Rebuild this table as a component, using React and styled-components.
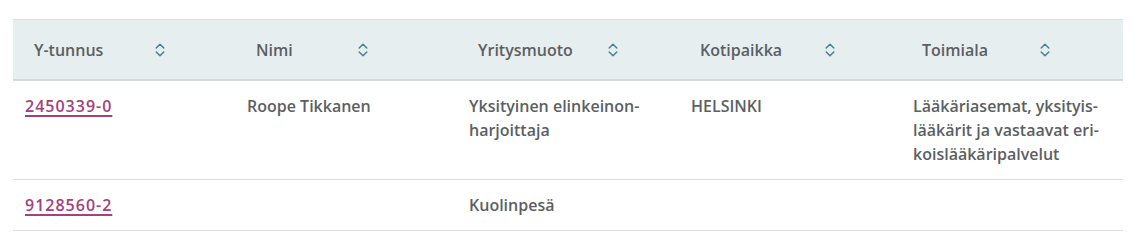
import React from "react";
import styled, { createGlobalStyle } from "styled-components";

const GlobalStyle = createGlobalStyle`
  html, body { margin: 0; padding: 0; background: #ffffff; }
  body {
    font-family: "Open Sans", "Noto Sans", sans-serif;
    font-weight: 600;
    font-size: 16px;
    color: #5b5f63;
  }
`;

const Page = styled.div`
  padding: 19px 14px 0 13px;
`;

const Table = styled.table`
  width: 1110px;
  border-collapse: collapse;
  table-layout: fixed;
`;

const HeadRow = styled.tr`
  background: #e7eef0;
  border-top: 1px solid #d8dfe2;
  border-bottom: 2px solid #d2d8db;
`;

const HeadCell = styled.th`
  height: 59px;
  padding: 0 0 0 21px;
  text-align: left;
  font-weight: 600;
  vertical-align: middle;
`;

const SortButton = styled.button`
  display: grid;
  grid-template-columns: ${(p) => p.$labelWidth}px 10px;
  justify-items: start;
  align-items: center;
  padding: 0;
  border: 0;
  background: transparent;
  font: inherit;
  text-align: left;
  color: #5b5f63;
  line-height: 24px;
  cursor: pointer;
`;

const SortIcon = styled.svg`
  display: block;
  width: 10px;
  height: 16px;
`;

const BodyRow = styled.tr`
  border-bottom: 1px solid #dadcdd;
`;

const Cell = styled.td`
  padding: 13px 12px;
  line-height: 24px;
  vertical-align: top;
  color: #5b5f63;
  hyphens: manual;
`;

const IdLink = styled.a`
  color: #a3417c;
  letter-spacing: 1px;
  text-decoration: underline;
  text-decoration-thickness: 2px;
  text-underline-offset: 3px;
`;

const columns = [
  { label: "Y-tunnus", labelWidth: 121 },
  { label: "Nimi", labelWidth: 102 },
  { label: "Yritysmuoto", labelWidth: 130 },
  { label: "Kotipaikka", labelWidth: 125 },
  { label: "Toimiala", labelWidth: 118 },
];

const rows = [
  {
    id: "2450339-0",
    name: "Roope Tikkanen",
    form: "Yksityinen elinkeinon\u00ADharjoittaja",
    city: "HELSINKI",
    industry: "Lääkäriasemat, yksityis\u00ADlääkärit ja vastaavat eri\u00ADkoislääkäripalvelut",
  },
  { id: "9128560-2", name: "", form: "Kuolinpesä", city: "", industry: "" },
];

function ChevronsIcon() {
  return (
    <SortIcon viewBox="0 0 10 16" fill="none" stroke="#43828f" strokeWidth="1.5" strokeLinecap="round" strokeLinejoin="round">
      <polyline points="1.2,6 5,2.2 8.8,6" />
      <polyline points="1.2,10 5,13.8 8.8,10" />
    </SortIcon>
  );
}

export default function App() {
  return (
    <Page>
      <GlobalStyle />
      <Table>
        <thead>
          <HeadRow>
            {columns.map((c) => (
              <HeadCell key={c.label}>
                <SortButton $labelWidth={c.labelWidth}>
                  <span>{c.label}</span>
                  <ChevronsIcon />
                </SortButton>
              </HeadCell>
            ))}
          </HeadRow>
        </thead>
        <tbody>
          {rows.map((r) => (
            <BodyRow key={r.id}>
              <Cell>
                <IdLink href="#">{r.id}</IdLink>
              </Cell>
              <Cell>{r.name}</Cell>
              <Cell>{r.form}</Cell>
              <Cell>{r.city}</Cell>
              <Cell>{r.industry}</Cell>
            </BodyRow>
          ))}
        </tbody>
      </Table>
    </Page>
  );
}
